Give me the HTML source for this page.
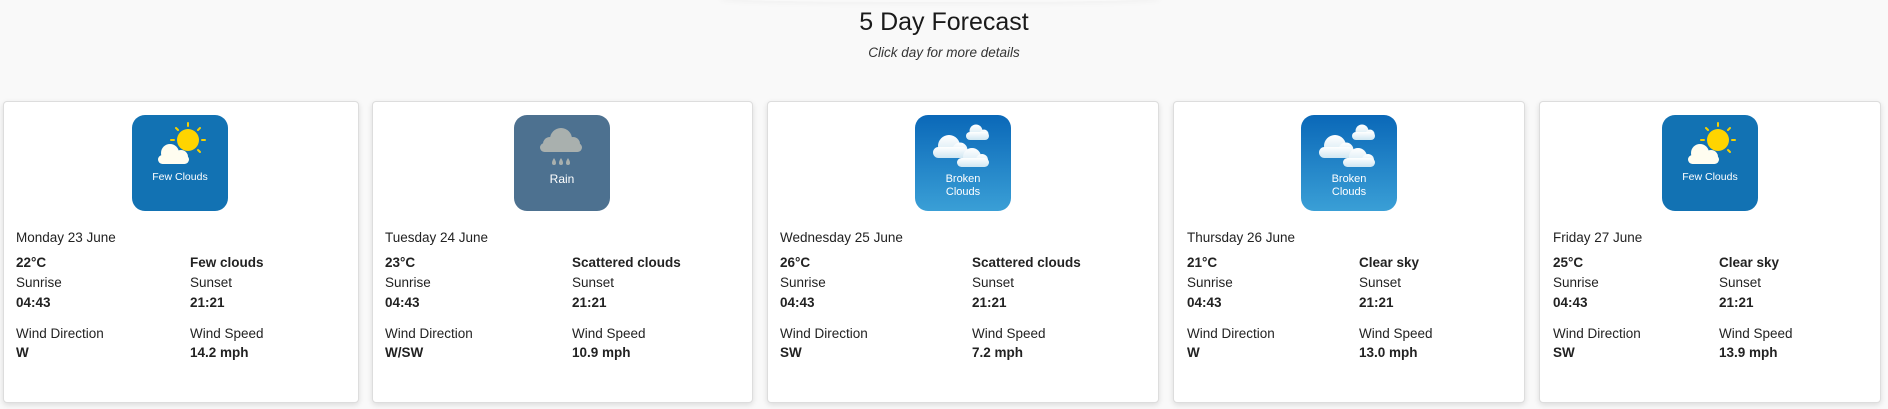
<!DOCTYPE html>
<html><head><meta charset="utf-8"><style>
*{margin:0;padding:0;box-sizing:border-box}
body{width:1888px;height:409px;background:#f9f9f9;font-family:"Liberation Sans",sans-serif;color:#222;position:relative;overflow:hidden}
.topsh{position:absolute;left:720px;top:-8px;width:440px;height:10px;box-shadow:0 2px 6px rgba(0,0,0,.035);border-radius:40%}
h1{position:absolute;left:0;width:1888px;top:7px;text-align:center;font-weight:400;font-size:25px;line-height:30px;color:#1a1a1a}
.sub{position:absolute;left:0;width:1888px;top:45px;text-align:center;font-style:italic;font-size:13.5px;line-height:16px;color:#333}
.card{position:absolute;top:101px;height:302px;background:#fff;border:1px solid #ddd;border-radius:4px;box-shadow:0 2px 6px rgba(0,0,0,.12)}
.ic{position:absolute;top:115px;width:96px;height:96px;border-radius:13px;overflow:hidden}
.t{position:absolute;font-size:13.5px;line-height:16px;white-space:nowrap}
.b{font-weight:700}
</style></head><body>
<div class="topsh"></div>
<h1>5 Day Forecast</h1>
<div class="sub">Click day for more details</div>

<div class="card" style="left:3px;width:356px"></div>
<div class="card" style="left:372px;width:381px"></div>
<div class="card" style="left:767px;width:392px"></div>
<div class="card" style="left:1173px;width:352px"></div>
<div class="card" style="left:1539px;width:342px"></div>

<svg width="0" height="0" style="position:absolute">
<defs>
<linearGradient id="bg" x1="0" y1="0" x2="0" y2="1"><stop offset="0" stop-color="#0a68b8"/><stop offset="1" stop-color="#3a9fd6"/></linearGradient>
<linearGradient id="cg" x1="0" y1="0" x2="0" y2="1"><stop offset="0" stop-color="#ffffff"/><stop offset="1" stop-color="#cfe6f2"/></linearGradient>
<g id="few">
<rect width="96" height="96" fill="#1272b3"/>
<g stroke="#f5d000" stroke-width="2" stroke-linecap="round">
<line x1="56" y1="8" x2="56" y2="11"/>
<line x1="39" y1="25" x2="42" y2="25"/><line x1="70" y1="25" x2="73" y2="25"/>
<line x1="44" y1="13" x2="46" y2="15"/><line x1="66" y1="35" x2="68" y2="37"/>
<line x1="68" y1="13" x2="66" y2="15"/>
</g>
<circle cx="56" cy="25" r="11" fill="#ffd400"/>
<g fill="#fffdf0">
<circle cx="38" cy="38" r="9"/>
<circle cx="49" cy="42" r="7"/>
<rect x="26" y="40" width="31" height="9" rx="4.5"/>
</g>
<text x="48" y="65" text-anchor="middle" font-size="10.5" fill="#fff" font-family="Liberation Sans">Few Clouds</text>
</g>
<g id="broken">
<rect width="96" height="96" fill="url(#bg)"/>
<g fill="url(#cg)">
<circle cx="61" cy="16" r="6.5"/><circle cx="69" cy="19" r="4.5"/><rect x="51" y="17" width="23" height="8" rx="4"/>
</g>
<g fill="url(#cg)">
<circle cx="34" cy="31" r="11"/><circle cx="45" cy="35" r="7.5"/><rect x="18" y="32" width="35" height="11" rx="5.5"/>
</g>
<g fill="url(#cg)">
<circle cx="57" cy="42" r="9"/><circle cx="67" cy="45" r="6"/><rect x="42" y="43" width="32" height="9" rx="4.5"/>
</g>
<text x="48" y="67" text-anchor="middle" font-size="11" fill="#fff" font-family="Liberation Sans">Broken</text>
<text x="48" y="80" text-anchor="middle" font-size="11" fill="#fff" font-family="Liberation Sans">Clouds</text>
</g>
<g id="rain">
<rect width="96" height="96" fill="#4d7190"/>
<g fill="#a9b0ae">
<circle cx="47" cy="24" r="11"/><circle cx="36" cy="29" r="7"/><circle cx="59" cy="29" r="7"/><rect x="26" y="28" width="42" height="9" rx="4.5"/>
</g>
<g fill="#a9b0ae"><path d="M40 43 Q42 46 42 48 A2 2 0 0 1 38 48 Q38 46 40 43Z"/><path d="M47 43 Q49 46 49 48 A2 2 0 0 1 45 48 Q45 46 47 43Z"/><path d="M54 43 Q56 46 56 48 A2 2 0 0 1 52 48 Q52 46 54 43Z"/></g>
<text x="48" y="68" text-anchor="middle" font-size="12" fill="#fff" font-family="Liberation Sans">Rain</text>
</g>
</defs></svg>

<svg class="ic" style="left:132px" viewBox="0 0 96 96"><use href="#few"/></svg>
<svg class="ic" style="left:514px" viewBox="0 0 96 96"><use href="#rain"/></svg>
<svg class="ic" style="left:915px" viewBox="0 0 96 96"><use href="#broken"/></svg>
<svg class="ic" style="left:1301px" viewBox="0 0 96 96"><use href="#broken"/></svg>
<svg class="ic" style="left:1662px" viewBox="0 0 96 96"><use href="#few"/></svg>

<!-- card 1 -->
<div class="t" style="left:16px;top:230px">Monday 23 June</div>
<div class="t b" style="left:16px;top:255px">22°C</div>
<div class="t b" style="left:190px;top:255px">Few clouds</div>
<div class="t" style="left:16px;top:275px">Sunrise</div>
<div class="t" style="left:190px;top:275px">Sunset</div>
<div class="t b" style="left:16px;top:295px">04:43</div>
<div class="t b" style="left:190px;top:295px">21:21</div>
<div class="t" style="left:16px;top:326px">Wind Direction</div>
<div class="t" style="left:190px;top:326px">Wind Speed</div>
<div class="t b" style="left:16px;top:345px">W</div>
<div class="t b" style="left:190px;top:345px">14.2 mph</div>

<!-- card 2 -->
<div class="t" style="left:385px;top:230px">Tuesday 24 June</div>
<div class="t b" style="left:385px;top:255px">23°C</div>
<div class="t b" style="left:572px;top:255px">Scattered clouds</div>
<div class="t" style="left:385px;top:275px">Sunrise</div>
<div class="t" style="left:572px;top:275px">Sunset</div>
<div class="t b" style="left:385px;top:295px">04:43</div>
<div class="t b" style="left:572px;top:295px">21:21</div>
<div class="t" style="left:385px;top:326px">Wind Direction</div>
<div class="t" style="left:572px;top:326px">Wind Speed</div>
<div class="t b" style="left:385px;top:345px">W/SW</div>
<div class="t b" style="left:572px;top:345px">10.9 mph</div>

<!-- card 3 -->
<div class="t" style="left:780px;top:230px">Wednesday 25 June</div>
<div class="t b" style="left:780px;top:255px">26°C</div>
<div class="t b" style="left:972px;top:255px">Scattered clouds</div>
<div class="t" style="left:780px;top:275px">Sunrise</div>
<div class="t" style="left:972px;top:275px">Sunset</div>
<div class="t b" style="left:780px;top:295px">04:43</div>
<div class="t b" style="left:972px;top:295px">21:21</div>
<div class="t" style="left:780px;top:326px">Wind Direction</div>
<div class="t" style="left:972px;top:326px">Wind Speed</div>
<div class="t b" style="left:780px;top:345px">SW</div>
<div class="t b" style="left:972px;top:345px">7.2 mph</div>

<!-- card 4 -->
<div class="t" style="left:1187px;top:230px">Thursday 26 June</div>
<div class="t b" style="left:1187px;top:255px">21°C</div>
<div class="t b" style="left:1359px;top:255px">Clear sky</div>
<div class="t" style="left:1187px;top:275px">Sunrise</div>
<div class="t" style="left:1359px;top:275px">Sunset</div>
<div class="t b" style="left:1187px;top:295px">04:43</div>
<div class="t b" style="left:1359px;top:295px">21:21</div>
<div class="t" style="left:1187px;top:326px">Wind Direction</div>
<div class="t" style="left:1359px;top:326px">Wind Speed</div>
<div class="t b" style="left:1187px;top:345px">W</div>
<div class="t b" style="left:1359px;top:345px">13.0 mph</div>

<!-- card 5 -->
<div class="t" style="left:1553px;top:230px">Friday 27 June</div>
<div class="t b" style="left:1553px;top:255px">25°C</div>
<div class="t b" style="left:1719px;top:255px">Clear sky</div>
<div class="t" style="left:1553px;top:275px">Sunrise</div>
<div class="t" style="left:1719px;top:275px">Sunset</div>
<div class="t b" style="left:1553px;top:295px">04:43</div>
<div class="t b" style="left:1719px;top:295px">21:21</div>
<div class="t" style="left:1553px;top:326px">Wind Direction</div>
<div class="t" style="left:1719px;top:326px">Wind Speed</div>
<div class="t b" style="left:1553px;top:345px">SW</div>
<div class="t b" style="left:1719px;top:345px">13.9 mph</div>
</body></html>
